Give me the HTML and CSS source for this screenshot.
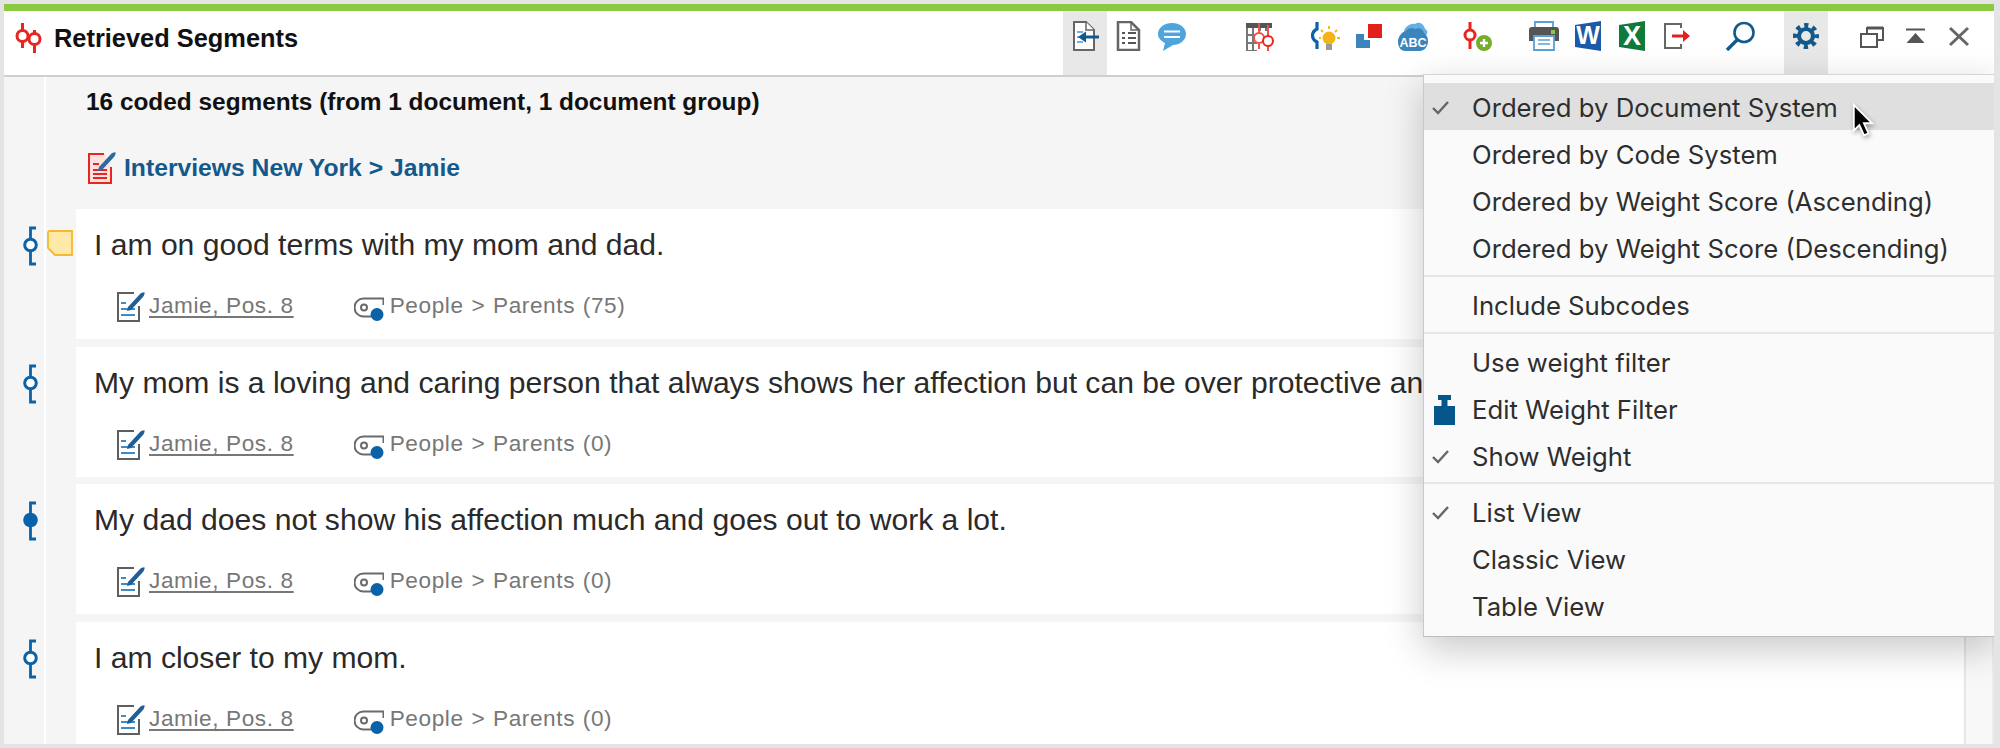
FILE: index.html
```html
<!DOCTYPE html>
<html lang="en">
<head>
<meta charset="utf-8">
<title>Retrieved Segments</title>
<link rel="stylesheet" href="styles.css">
</head>
<body>
<svg class="sprite" width="0" height="0" aria-hidden="true">
  <defs>
    <symbol id="docpen" viewBox="0 0 28 30">
      <path d="M17 1H1V29H22V14" fill="#fff" stroke="#5f5f5f" stroke-width="2"/>
      <path d="M4 11H9M4 17H18M4 23H18" stroke="#3d8cc8" stroke-width="2" fill="none"/>
      <path d="M11 15L23 2C24 1 27 0 27.500 .5C28 1 27 4 26 5L14 18L10 19Z" fill="#1f5f96"/>
    </symbol>
    <symbol id="tag" viewBox="0 0 30 30">
      <path d="M29.500 13V6.500H9.500A9 9 0 0 0 9.500 24.500H17" fill="none" stroke="#6a6a6a" stroke-width="2"/>
      <circle cx="10" cy="15.500" r="3" fill="none" stroke="#6a6a6a" stroke-width="2"/>
      <circle cx="23" cy="22.500" r="6.500" fill="#0a63a8"/>
    </symbol>
    <symbol id="code" viewBox="0 0 16 40">
      <path d="M13 2H7.500V38H13" fill="none" stroke="#0a63a8" stroke-width="2.800"/>
      <circle cx="7.500" cy="19" r="5.800" fill="#fff" stroke="#0a63a8" stroke-width="3"/>
    </symbol>
    <symbol id="codefill" viewBox="0 0 16 40">
      <path d="M13 2H7.500V38H13" fill="none" stroke="#0a63a8" stroke-width="2.800"/>
      <circle cx="7.500" cy="19" r="7.300" fill="#0a63a8"/>
    </symbol>
  </defs>
</svg>
<div class="window">
  <div class="accent"></div>
  <header class="header">
    <div class="brand">
      <svg class="brand-icon" width="30" height="30" viewBox="0 0 30 30"><path d="M7.500 0V25M19.500 7V30" stroke="#e8261f" stroke-width="3" fill="none"/><circle cx="7.500" cy="13" r="5.500" fill="#fff" stroke="#e8261f" stroke-width="3"/><circle cx="19.500" cy="16" r="5.500" fill="#fff" stroke="#e8261f" stroke-width="3"/></svg>
      <span class="brand-title">Retrieved Segments</span>
    </div>
    <div class="tools">
      <div class="tool active"><svg width="30" height="30" viewBox="0 0 30 30"><path d="M4 1H16L24 9V29H4Z" fill="#fff" stroke="#666" stroke-width="2"/><path d="M16 1V9H24" fill="#fff" stroke="#666" stroke-width="1.500"/><path d="M7 11H13M7 16H11M7 21H13" stroke="#6fb0e0" stroke-width="2"/><path d="M14 16H29" stroke="#14598c" stroke-width="3"/><path d="M8 16L16 10.500V21.500Z" fill="#14598c"/></svg></div>
      <div class="tool"><svg width="30" height="30" viewBox="0 0 30 30"><path d="M4 1H17L25 9V29H4Z" fill="#fff" stroke="#666" stroke-width="2.500"/><path d="M17 1V9H25" fill="none" stroke="#666" stroke-width="1.500"/><path d="M8 12H11M14 12H22M8 17H11M14 17H22M8 22H11M14 22H22" stroke="#555" stroke-width="2.200"/></svg></div>
      <div class="tool"><svg width="30" height="30" viewBox="0 0 30 30"><path d="M14 2C21.500 2 28 6.500 28 13C28 19.500 21.500 24 15 24L5 30L7 22C3 20 0 17 0 13C0 6.500 6.500 2 14 2Z" fill="#4ea4dc"/><path d="M6 10.500H22M6 16H22" stroke="#fff" stroke-width="2.200"/></svg></div>
      <div class="tool gap-42"><svg width="30" height="30" viewBox="0 0 30 30"><path d="M2 2H28V7H2Z" fill="#555"/><path d="M3 7V30H13M3 14H13M3 22H13M9 7V30M16 7V10M22 7V10" stroke="#777" stroke-width="2" fill="none"/><path d="M15 2V28M24 4V30" stroke="#f0514a" stroke-width="2" fill="none"/><circle cx="15" cy="17" r="5" fill="#fff" stroke="#f0514a" stroke-width="2"/><circle cx="24" cy="20" r="5" fill="#fff" stroke="#e8261f" stroke-width="2"/></svg></div>
      <div class="tool gap-22"><svg width="30" height="30" viewBox="0 0 30 30"><path d="M7 1V8C1 11 1 18 7 21V28" stroke="#0a63a8" stroke-width="3.200" fill="none"/><circle cx="19" cy="17" r="6.500" fill="#f2b416"/><path d="M16 23H22V29H16Z" fill="#9a9a9a"/><path d="M19 5V8M11 9L13 11M27 9L25 11M9 17H11M27 17H30" stroke="#f2b416" stroke-width="1.800"/></svg></div>
      <div class="tool"><svg width="30" height="30" viewBox="0 0 30 30"><path d="M2 13H10V19H16V27H2Z" fill="#3b84bc"/><path d="M14 3H28V17H14Z" fill="#e3211b"/></svg></div>
      <div class="tool"><svg width="30" height="30" viewBox="0 0 30 30"><path d="M6 10C8 4 14 2 17 3C21 0 26 3 27 8C30 9 30 13 28 14H6Z" fill="#64b0e4"/><path d="M8 10C10 7 14 6 17 8C21 6 25 8 26 12C29 14 30 17 30 20C30 26 26 30 22 30H7C3 30 0 26 0 21C0 15 4 11 8 10Z" fill="#3b84bc"/><text class="svg-abc" x="15" y="25.500" text-anchor="middle">ABC</text></svg></div>
      <div class="tool gap-21"><svg width="30" height="30" viewBox="0 0 30 30"><path d="M7 1V28" stroke="#e8261f" stroke-width="3" fill="none"/><circle cx="7" cy="14" r="5" fill="#fff" stroke="#e8261f" stroke-width="3"/><circle cx="21" cy="22" r="8" fill="#76ad2b"/><path d="M17 22H25M21 18V26" stroke="#fff" stroke-width="2.400"/></svg></div>
      <div class="tool gap-22"><svg width="30" height="30" viewBox="0 0 30 30"><path d="M6 7V1H24V7" fill="#fff" stroke="#5aa0d4" stroke-width="1.800"/><path d="M3 6H27Q30 6 30 9V20H0V9Q0 6 3 6Z" fill="#555"/><path d="M5 15H25V29H5Z" fill="#fff" stroke="#5aa0d4" stroke-width="1.800"/><path d="M9 19H21M9 23H21" stroke="#5aa0d4" stroke-width="1.500"/><path d="M22 9H26V13H22Z" fill="#8bc943"/></svg></div>
      <div class="tool"><svg width="30" height="30" viewBox="0 0 30 30"><path d="M2 4L28 0V30L2 26Z" fill="#1a5aa8"/><text class="svg-w" x="15" y="23" text-anchor="middle">W</text></svg></div>
      <div class="tool"><svg width="30" height="30" viewBox="0 0 30 30"><path d="M2 4L28 0V30L2 26Z" fill="#0f7a3a"/><text class="svg-x" x="15" y="24" text-anchor="middle">X</text></svg></div>
      <div class="tool"><svg width="30" height="30" viewBox="0 0 30 30"><path d="M20 7V3H4V27H20V23" fill="none" stroke="#666" stroke-width="2"/><path d="M11 15H24" stroke="#e3211b" stroke-width="3"/><path d="M22 9L29 15L22 21Z" fill="#e3211b"/></svg></div>
      <div class="tool gap-20"><svg width="30" height="30" viewBox="0 0 30 30"><circle cx="19" cy="11.500" r="9.500" fill="none" stroke="#14598c" stroke-width="2.600"/><path d="M12 19L2 29" stroke="#14598c" stroke-width="3.400"/></svg></div>
      <div class="tool active gap-22"><svg width="30" height="30" viewBox="0 0 30 30"><circle cx="15" cy="15" r="7" fill="none" stroke="#14598c" stroke-width="4.200"/><circle class="gear-teeth" cx="15" cy="15" r="10.500" fill="none" stroke="#14598c" stroke-width="5"/></svg></div>
      <div class="tool gap-21"><svg width="30" height="30" viewBox="0 0 30 30"><path d="M11 7H27V19H11Z" fill="#fff" stroke="#555" stroke-width="2"/><path d="M11 7H27" stroke="#555" stroke-width="3"/><path d="M5 13H21V26H5Z" fill="#fff" stroke="#555" stroke-width="2"/></svg></div>
      <div class="tool"><svg width="30" height="30" viewBox="0 0 30 30"><path d="M6 8.500H25" stroke="#555" stroke-width="2"/><path d="M6.500 22L15.500 12L24.500 22Z" fill="#555"/></svg></div>
      <div class="tool"><svg width="30" height="30" viewBox="0 0 30 30"><path d="M6 7L24 24M24 7L6 24" stroke="#666" stroke-width="3"/></svg></div>
    </div>
  </header>
  <div class="main">
    <div class="list">
      <section class="summary">
        <div class="summary-count">16 coded segments (from 1 document, 1 document group)</div>
        <div class="summary-doc">
          <svg width="30" height="32" viewBox="0 0 30 32"><path d="M18 2H3V31H25V15" fill="#fde0e0" stroke="#e8261f" stroke-width="2"/><path d="M7 12H13M7 18H21M7 22H21M7 26H21" stroke="#e8261f" stroke-width="1.800"/><path d="M13 15L25 2C26 1 29 0 29.500 .5C30 1 29 4 28 5L16 18L12 19Z" fill="#2d6aa0"/></svg>
          <span>Interviews New York &gt; Jamie</span>
        </div>
      </section>
      <article class="row">
        <div class="gutter"><svg class="code-mark" width="16" height="40"><use href="#code"/></svg><svg class="memo" width="26" height="26" viewBox="0 0 26 26"><path d="M1 3Q1 1 3 1H25V25H8L1 18Z" fill="#fee9a9" stroke="#f5b82e" stroke-width="1.800"/></svg></div>
        <div class="card">
          <p class="segment">I am on good terms with my mom and dad.</p>
          <div class="meta"><svg width="28" height="30"><use href="#docpen"/></svg><a class="source">Jamie, Pos. 8</a><svg class="tag" width="30" height="30"><use href="#tag"/></svg><span class="code-path">People &gt; Parents (75)</span></div>
        </div>
      </article>
      <article class="row">
        <div class="gutter"><svg class="code-mark" width="16" height="40"><use href="#code"/></svg></div>
        <div class="card">
          <p class="segment">My mom is a loving and caring person that always shows her affection but can be over protective and</p>
          <div class="meta"><svg width="28" height="30"><use href="#docpen"/></svg><a class="source">Jamie, Pos. 8</a><svg class="tag" width="30" height="30"><use href="#tag"/></svg><span class="code-path">People &gt; Parents (0)</span></div>
        </div>
      </article>
      <article class="row">
        <div class="gutter"><svg class="code-mark" width="16" height="40"><use href="#codefill"/></svg></div>
        <div class="card">
          <p class="segment">My dad does not show his affection much and goes out to work a lot.</p>
          <div class="meta"><svg width="28" height="30"><use href="#docpen"/></svg><a class="source">Jamie, Pos. 8</a><svg class="tag" width="30" height="30"><use href="#tag"/></svg><span class="code-path">People &gt; Parents (0)</span></div>
        </div>
      </article>
      <article class="row">
        <div class="gutter"><svg class="code-mark" width="16" height="40"><use href="#code"/></svg></div>
        <div class="card">
          <p class="segment">I am closer to my mom.</p>
          <div class="meta"><svg width="28" height="30"><use href="#docpen"/></svg><a class="source">Jamie, Pos. 8</a><svg class="tag" width="30" height="30"><use href="#tag"/></svg><span class="code-path">People &gt; Parents (0)</span></div>
        </div>
      </article>
    </div>
    <div class="scroll"></div>
  </div>
  <nav class="menu">
    <div class="item hover"><span class="mark"><svg width="30" height="30" viewBox="0 0 30 30"><path d="M1 15L6 20L16 9" fill="none" stroke="#666" stroke-width="2.400"/></svg></span>Ordered by Document System</div>
    <div class="item"><span class="mark"></span>Ordered by Code System</div>
    <div class="item"><span class="mark"></span>Ordered by Weight Score (Ascending)</div>
    <div class="item"><span class="mark"></span>Ordered by Weight Score (Descending)</div>
    <div class="sep"></div>
    <div class="item"><span class="mark"></span>Include Subcodes</div>
    <div class="sep"></div>
    <div class="item"><span class="mark"></span>Use weight filter</div>
    <div class="item"><span class="mark"><svg width="30" height="30" viewBox="0 0 30 30"><path d="M6 0H19V5H15.500V11H23V30H2V11H9.500V5H6Z" fill="#05568a"/></svg></span>Edit Weight Filter</div>
    <div class="item"><span class="mark"><svg width="30" height="30" viewBox="0 0 30 30"><path d="M1 15L6 20L16 9" fill="none" stroke="#666" stroke-width="2.400"/></svg></span>Show Weight</div>
    <div class="sep sep-last"></div>
    <div class="item"><span class="mark"><svg width="30" height="30" viewBox="0 0 30 30"><path d="M1 15L6 20L16 9" fill="none" stroke="#666" stroke-width="2.400"/></svg></span>List View</div>
    <div class="item"><span class="mark"></span>Classic View</div>
    <div class="item"><span class="mark"></span>Table View</div>
  </nav>
  <svg class="cursor" width="26" height="35" viewBox="0 0 28 38"><path d="M4 2V30L10 24L15 35L20 33L15 22H24Z" fill="#000" stroke="#fff" stroke-width="2"/></svg>
</div>
</body>
</html>
```
FILE: styles.css
```css
* { box-sizing: border-box; }
html, body { margin: 0; padding: 0; height: 100%; overflow: hidden; }
body { font-family: "Liberation Sans", Arial, sans-serif; background: #e4e4e4; }
.sprite { position: absolute; }
svg { display: block; flex: none; }

.window {
  position: relative;
  width: 2000px;
  height: 748px;
  display: flex;
  flex-direction: column;
  border-style: solid;
  border-color: #e4e4e4;
  border-width: 4px 6px 4px 4px;
  overflow: hidden;
}
.accent { height: 7px; background: #8bc943; flex: none; }

.header {
  height: 66px;
  flex: none;
  display: flex;
  justify-content: space-between;
  background: #fff;
  border-bottom: 2px solid #cfcfcf;
  padding-right: 13px;
}
.brand { display: flex; align-items: flex-start; padding: 12px 0 0 11px; gap: 9px; }
.brand-title { font-size: 25.400px; font-weight: 700; line-height: 30px; color: #111; }

.tools { display: flex; }
.tool { width: 44px; display: flex; justify-content: center; padding-top: 10px; }
.tool.active { background: #e8e8e8; }
.gap-20 { margin-left: 20px; }
.gap-21 { margin-left: 21px; }
.gap-22 { margin-left: 22px; }
.gap-42 { margin-left: 42px; }
.svg-abc { font: 700 12.500px "Liberation Sans", Arial, sans-serif; fill: #fff; }
.svg-w { font: 700 25px "Liberation Sans", Arial, sans-serif; fill: #fff; }
.svg-x { font: 700 27px "Liberation Sans", Arial, sans-serif; fill: #fff; }
.gear-teeth { stroke-dasharray: 4.12 4.12; stroke-dashoffset: 2.06; }

.main { flex: 1; min-height: 0; display: flex; background: #f5f5f5; }
.list {
  flex: 1;
  min-width: 0;
  display: flex;
  flex-direction: column;
  gap: 7.5px;
  overflow: hidden;
  background: linear-gradient(90deg, #f5f5f5 40px, #fff 40px, #fff 42px, #f5f5f5 42px);
}
.scroll { width: 30px; background: #f8f8f8; border-left: 2px solid #e6e6e6; border-right: 2px solid #ececec; }

.summary { height: 124.5px; flex: none; padding: 10px 0 0 82px; }
.summary-count { font-size: 24.400px; font-weight: 700; line-height: 30px; color: #111; }
.summary-doc { display: flex; align-items: center; gap: 8px; margin-top: 35px; font-size: 24.700px; font-weight: 700; color: #14598c; }

.row { display: flex; flex: none; height: 130px; }
.gutter { width: 72px; flex: none; display: flex; align-items: flex-start; padding: 17px 0 0 19px; }
.memo { margin: 4px 0 0 8px; }
.card { flex: 1; min-width: 0; background: #fff; padding: 18px 0 0 18px; }
.segment { margin: 0; max-width: 1329px; height: 36px; line-height: 36px; font-size: 30.100px; color: #2a2a2a; white-space: nowrap; overflow: hidden; }
.meta { display: flex; align-items: center; margin: 29px 0 0 23px; height: 30px; color: #777; font-size: 22.600px; letter-spacing: .6px; line-height: 28px; }
.source { margin-left: 4px; padding-bottom: 2px; text-decoration: underline; text-underline-offset: 3px; }
.code-path { padding-bottom: 2px; word-spacing: .9px; }
.tag { margin: 0 6px 0 60px; }

.menu {
  position: absolute;
  left: 1419px;
  top: 70px;
  width: 573px;
  height: 563px;
  padding-top: 8px;
  background: #fafafa;
  border-left: 1px solid #c9c9c9;
  border-top: 1px solid #d6d6d6;
  border-bottom: 1px solid #bdbdbd;
  box-shadow: 0 12px 36px rgba(0, 0, 0, .22);
  font-family: Inter, "Liberation Sans", sans-serif;
  font-size: 25.700px;
  color: #2e2e2e;
}
.item { height: 47px; display: flex; align-items: center; white-space: nowrap; padding-top: 2px; }
.item.hover { background: #dfdfdf; }
.mark { width: 48px; flex: none; padding-left: 8px; }
.sep { height: 2px; margin: 4px 0; background: #e6e6e6; }
.sep-last { margin: 3px 0 4px; }
.cursor { position: absolute; left: 1846px; top: 99px; filter: drop-shadow(1px 2px 2px rgba(0, 0, 0, .35)); }
```
